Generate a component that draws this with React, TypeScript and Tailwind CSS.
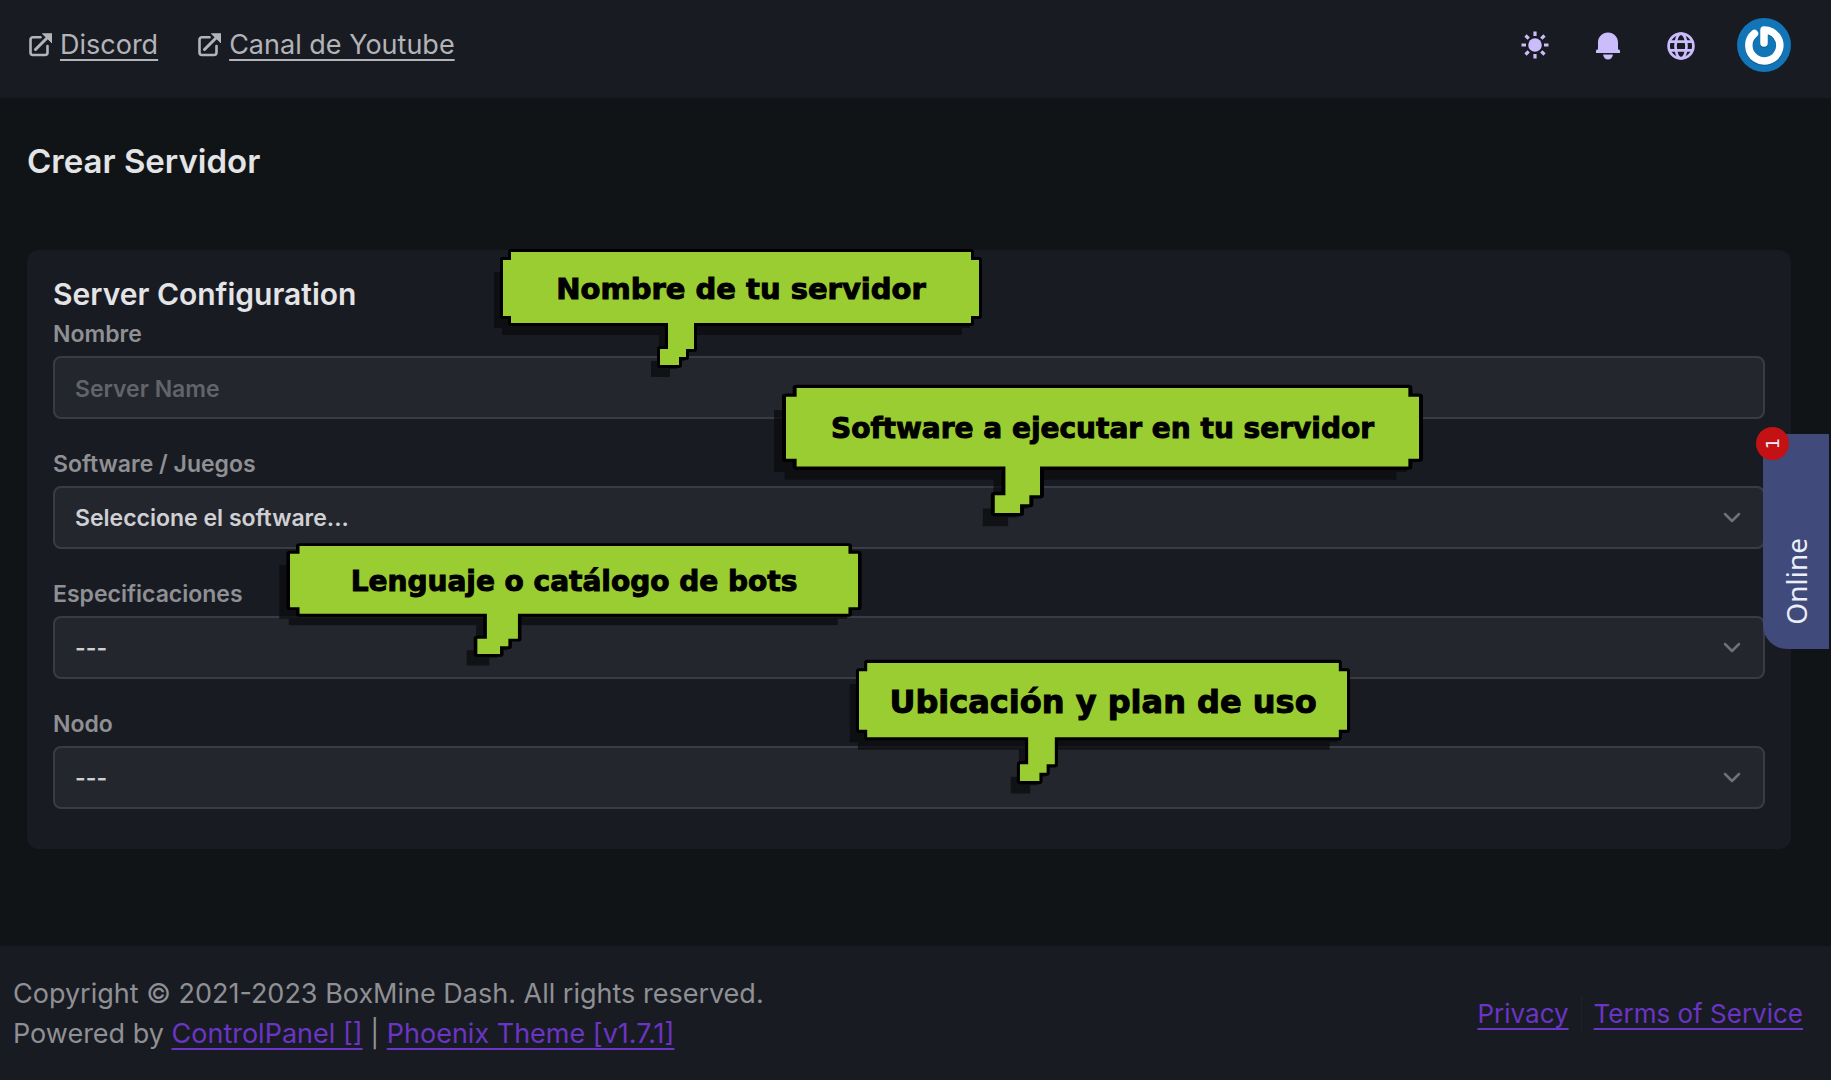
import type { ReactNode } from 'react';

const BUBBLE =
  'M8 0H468V8H476V64H468V71H191V97H183V105H176V113H157V97H165V71H8V64H0V8H8Z';

function Bubble({ className, textClass, children }: { className: string; textClass: string; children: ReactNode }) {
  return (
    <div className={`pointer-events-none absolute ${className}`}>
      <svg viewBox="0 0 476 113" preserveAspectRatio="none" className="absolute inset-0 h-full w-full overflow-visible" aria-hidden="true">
        <path d={BUBBLE} fill="#0a0b0d" fillOpacity="0.72" transform="translate(-9 12)" />
        <path d={BUBBLE} fill="#000" stroke="#000" strokeWidth="6" strokeLinejoin="round" />
        <path d={BUBBLE} fill="#9acd32" />
      </svg>
      <p className={`relative flex h-[66%] items-center justify-center whitespace-nowrap font-['DejaVu_Sans',sans-serif] font-bold text-black [-webkit-text-stroke:1px_black] ${textClass}`}>
        {children}
      </p>
    </div>
  );
}

function ExternalIcon() {
  return (
    <svg viewBox="0 0 24 24" className="size-6" fill="none" aria-hidden="true">
      <path d="M12.500 4.300H5A2.500 2.500 0 0 0 2.500 6.800V19.500A2.500 2.500 0 0 0 5 22H17A2.500 2.500 0 0 0 19.500 19.500V13" stroke="currentColor" strokeWidth="2.600" strokeLinecap="round" />
      <path d="M7.500 16.500L19 5" stroke="currentColor" strokeWidth="3" strokeLinecap="round" />
      <path d="M14.500 .8H24V10Z" fill="currentColor" stroke="currentColor" strokeLinejoin="round" />
    </svg>
  );
}

function SunIcon() {
  return (
    <svg viewBox="0 0 28 28" className="size-7" fill="none" stroke="currentColor" strokeWidth="3.200" aria-hidden="true">
      <circle cx="14" cy="14" r="6.800" fill="currentColor" stroke="none" />
      <path d="M14 .5V5M14 23V27.500M.5 14H5M23 14H27.500M4.500 4.500L7.700 7.700M20.300 20.300L23.500 23.500M4.500 23.500L7.700 20.300M20.300 7.700L23.500 4.500" />
    </svg>
  );
}

function BellIcon() {
  return (
    <svg viewBox="0 0 24 28" className="h-7 w-6" fill="currentColor" aria-hidden="true">
      <path d="M12 0.500C17.800 0.500 22 5 22 10.500V17.500H22.500C23.300 17.500 24 18 24 19V21H0V19C0 18 .7 17.500 1.500 17.500H2V10.500C2 5 6.200 .5 12 .5Z" />
      <path d="M7 22.500H17C16.500 25.500 14.500 27.500 12 27.500S7.500 25.500 7 22.500Z" />
    </svg>
  );
}

function GlobeIcon() {
  return (
    <svg viewBox="0 0 28 28" className="size-7" fill="none" stroke="currentColor" strokeWidth="2.700" aria-hidden="true">
      <circle cx="14" cy="14" r="12.400" />
      <ellipse cx="14" cy="14" rx="5.500" ry="12.400" />
      <path d="M2.500 9.600H25.500M2.500 18.400H25.500" />
    </svg>
  );
}

function Avatar() {
  return (
    <svg viewBox="0 0 54 54" className="size-[54px]" fill="none" strokeLinecap="round" aria-hidden="true">
      <circle cx="27" cy="27" r="27" fill="#1275b7" />
      <path d="M17.500 15.500A15.500 15.500 0 1 0 27 12V25" stroke="#0b5388" strokeOpacity=".5" strokeWidth="8" strokeLinejoin="round" transform="translate(0 1)" />
      <path d="M17.500 15.500A15.500 15.500 0 1 0 27 12V25" stroke="#fff" strokeWidth="7.500" strokeLinejoin="round" />
    </svg>
  );
}

const control =
  'h-[63px] w-full appearance-none rounded-lg border-2 border-[#3a3c45] bg-[#24262e] px-5 pt-0.5 text-[23px] font-semibold outline-none';

function SelectField({ id, label, text }: { id: string; label: string; text: string }) {
  return (
    <div className="flex flex-col gap-1">
      <label htmlFor={id} className="text-[23px] leading-9 font-semibold text-[#8f9093]">{label}</label>
      <div className="relative">
        <select id={id} className={`${control} text-[#cfd0d3]`}>
          <option>{text}</option>
        </select>
        <svg viewBox="0 0 18 12" className="pointer-events-none absolute top-[26px] right-6 h-3 w-[18px]" fill="none" stroke="#6f7178" strokeWidth="2.500" strokeLinecap="round" strokeLinejoin="round" aria-hidden="true">
          <path d="M2 2L9 9L16 2" />
        </svg>
      </div>
    </div>
  );
}

const link = 'underline decoration-2 underline-offset-[5px]';

export default function App() {
  return (
    <div className="relative flex min-h-screen flex-col overflow-hidden bg-[#111416] font-['Inter',sans-serif]">
      <header className="flex h-[98px] items-center justify-between bg-[#191b23] pr-10 pb-2 pl-7 text-[27px] text-[#b3b4b8]">
        <nav className="flex items-center gap-[39px]">
          <a href="#discord" className="flex items-center gap-2"><ExternalIcon /><span className={link}>Discord</span></a>
          <a href="#youtube" className="flex items-center gap-2"><ExternalIcon /><span className={link}>Canal de Youtube</span></a>
        </nav>
        <div className="flex items-center text-[#cbbdfb]">
          <button aria-label="Tema" className="mr-[47px]"><SunIcon /></button>
          <button aria-label="Notificaciones" className="mr-[47px] pt-0.5"><BellIcon /></button>
          <button aria-label="Idioma" className="mr-[42px] pt-0.5"><GlobeIcon /></button>
          <button aria-label="Perfil"><Avatar /></button>
        </div>
      </header>

      <main className="flex-1 pr-10 pl-[27px]">
        <h1 className="pt-[43px] text-[33px] leading-10 font-semibold text-[#e4e4e7]">Crear Servidor</h1>
        <form className="mt-[69px] flex flex-col gap-[27px] rounded-xl bg-[#191b23] px-[26px] pt-6 pb-10">
          <div className="flex flex-col gap-0.5">
            <h2 className="text-[30px] leading-10 font-semibold text-[#e4e4e7]">Server Configuration</h2>
            <div className="flex flex-col gap-1">
              <label htmlFor="name" className="text-[23px] leading-9 font-semibold text-[#8f9093]">Nombre</label>
              <input id="name" placeholder="Server Name" className={`${control} text-[#cfd0d3] placeholder:text-[#62646b]`} />
            </div>
          </div>
          <SelectField id="software" label="Software / Juegos" text="Seleccione el software..." />
          <SelectField id="specs" label="Especificaciones" text="---" />
          <SelectField id="node" label="Nodo" text="---" />
        </form>
      </main>

      <footer className="flex items-center justify-between bg-[#191b23] pt-7 pr-7 pb-[26px] pl-[13px] text-[26px] leading-10 text-[#8f9093]">
        <div className="text-[27px] leading-10">
          <p>Copyright © 2021-2023 BoxMine Dash. All rights reserved.</p>
          <p>
            Powered by <a href="#controlpanel" className={`${link} text-[#6a35c4]`}>ControlPanel []</a> |{' '}
            <a href="#phoenix" className={`${link} text-[#6a35c4]`}>Phoenix Theme [v1.7.1]</a>
          </p>
        </div>
        <nav className="flex items-center text-[#6a35c4]">
          <a href="#privacy" className={link}>Privacy</a>
          <span className="mx-3 h-9 w-px bg-[#20222b]" />
          <a href="#terms" className={link}>Terms of Service</a>
        </nav>
      </footer>

      <button className="absolute top-[434px] right-[2px] h-[215px] w-[66px] rounded-bl-3xl bg-[#404a7b] font-['Noto_Sans',sans-serif] text-[#eceefa]">
        <span className="absolute bottom-6 left-0 flex w-full rotate-180 justify-center text-[28px] leading-9 [writing-mode:vertical-rl]">
          <span className="leading-[66px]">Online</span>
        </span>
        <span className="absolute -top-[7px] -left-[7px] flex size-[33px] -rotate-90 items-center justify-center rounded-full bg-[#c41214] font-['DejaVu_Sans',sans-serif] text-lg">1</span>
      </button>

      <Bubble className="top-[252px] left-[503px] h-[113px] w-[476px]" textClass="text-[29px]">Nombre de tu servidor</Bubble>
      <Bubble className="top-[388px] left-[786px] h-[125px] w-[633px]" textClass="text-[28px]">Software a ejecutar en tu servidor</Bubble>
      <Bubble className="top-[546px] left-[290px] h-[108px] w-[568px]" textClass="text-[28px]">Lenguaje o catálogo de bots</Bubble>
      <Bubble className="top-[663px] left-[859px] h-[118px] w-[488px]" textClass="text-[32px]">Ubicación y plan de uso</Bubble>
    </div>
  );
}
